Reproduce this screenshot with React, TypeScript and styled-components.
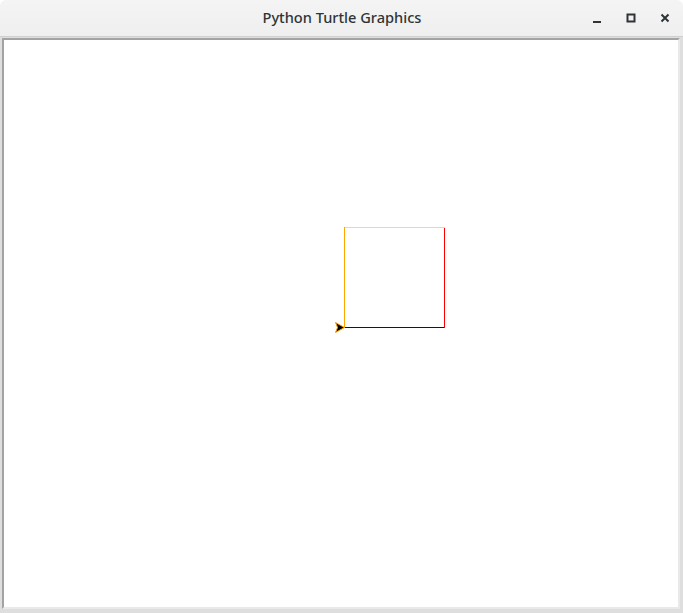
import styled, { createGlobalStyle } from "styled-components";

const GlobalStyle = createGlobalStyle`
  html, body {
    margin: 0;
    padding: 0;
    background: #ffffff;
  }
`;

const Window = styled.div`
  width: 683px;
  height: 613px;
  display: flex;
  flex-direction: column;
  overflow: hidden;
  border-radius: 6px 6px 0 0;
  font-family: "Noto Sans", "DejaVu Sans", sans-serif;
`;

const TitleBar = styled.header`
  height: 36px;
  flex: none;
  display: grid;
  grid-template-columns: 1fr auto 1fr;
  align-items: center;
  background: linear-gradient(#f4f4f4, #efefef);
  border-bottom: 1px solid #cfcfcf;
`;

const Title = styled.span`
  grid-column: 2;
  font-size: 14.6px;
  font-weight: 500;
  color: #2e3436;
  margin: 0 0 2px 1px;
`;

const Controls = styled.div`
  grid-column: 3;
  justify-self: end;
  display: flex;
  align-items: center;
  padding: 0 1px 1px 0;
`;

const ControlButton = styled.button`
  width: 34px;
  height: 24px;
  border: none;
  background: transparent;
  padding: 0;
  display: flex;
  align-items: center;
  justify-content: center;
  color: #2e3436;
`;

const Frame = styled.main`
  flex: 1;
  display: flex;
  padding: 1px 3px 4px 2px;
  background: #dedede;
`;

const Canvas = styled.div`
  flex: 1;
  position: relative;
  background: #ffffff;
  border-style: solid;
  border-width: 2px;
  border-color: #a3a3a3 #e9e9e9 #e9e9e9 #a3a3a3;
  overflow: hidden;
`;

const Drawing = styled.svg`
  display: block;
  width: 100%;
  height: 100%;
`;

// turtle origin inside the canvas (page 344,327 minus canvas corner 4,40)
const OX = 340;
const OY = 287;
const SIDE = 100;

export default function App() {
  return (
    <>
      <GlobalStyle />
      <Window>
        <TitleBar>
          <Title>Python Turtle Graphics</Title>
          <Controls>
            <ControlButton aria-label="Minimize">
              <svg width="10" height="10" viewBox="0 0 10 10">
                <rect x="1" y="8" width="8" height="2" fill="currentColor" />
              </svg>
            </ControlButton>
            <ControlButton aria-label="Maximize">
              <svg width="10" height="10" viewBox="0 0 10 10">
                <rect x="1.5" y="1.5" width="7" height="7" fill="none" stroke="currentColor" strokeWidth="2" />
              </svg>
            </ControlButton>
            <ControlButton aria-label="Close">
              <svg width="10" height="10" viewBox="0 0 10 10">
                <path d="M1.5 1.5 L8.5 8.5 M8.5 1.5 L1.5 8.5" stroke="currentColor" strokeWidth="2" />
              </svg>
            </ControlButton>
          </Controls>
        </TitleBar>
        <Frame>
          <Canvas>
            <Drawing>
              <line x1={OX} y1={OY + 0.5} x2={OX + SIDE + 1} y2={OY + 0.5} stroke="#0000cc" />
              <line x1={OX + SIDE + 0.5} y1={OY + 1} x2={OX + SIDE + 0.5} y2={OY - SIDE} stroke="#ff0000" />
              <line x1={OX + SIDE + 1} y1={OY - SIDE + 0.5} x2={OX} y2={OY - SIDE + 0.5} stroke="#ffee00" />
              <line x1={OX + 0.5} y1={OY - SIDE} x2={OX + 0.5} y2={OY + 1} stroke="#ffa500" />
              <polygon
                points={`${OX + 0.5},${OY + 0.5} ${OX - 8.5},${OY - 4.5} ${OX - 6.5},${OY + 0.5} ${OX - 8.5},${OY + 5.5}`}
                fill="#000000"
                stroke="#ffa500"
                strokeWidth="1"
              />
            </Drawing>
          </Canvas>
        </Frame>
      </Window>
    </>
  );
}
